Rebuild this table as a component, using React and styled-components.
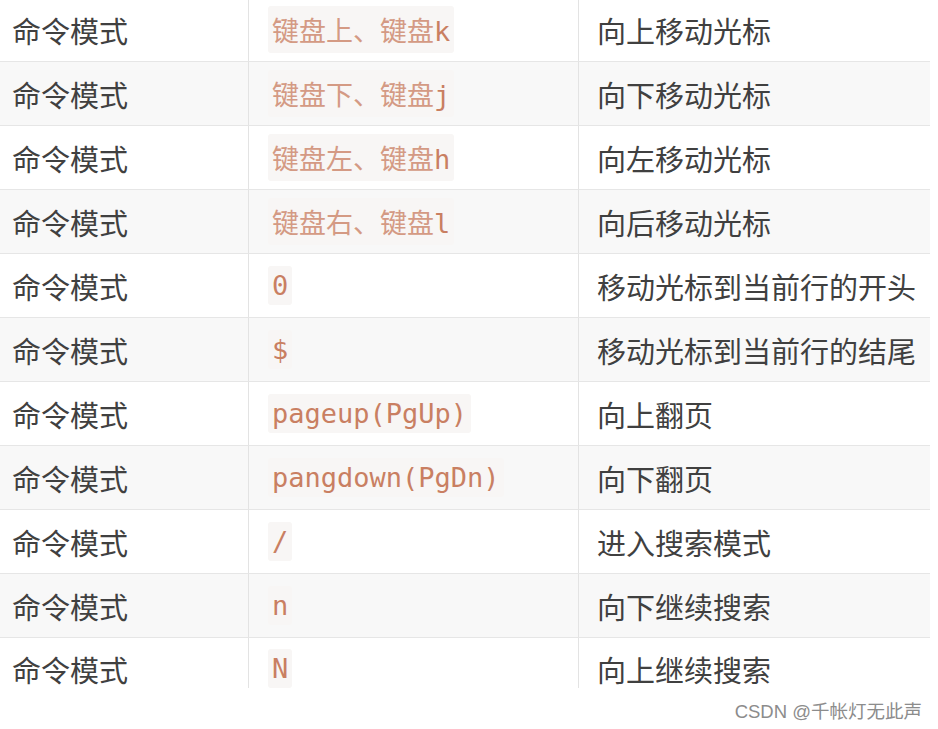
import styled, { createGlobalStyle } from 'styled-components'

const GlobalStyle = createGlobalStyle`
  html, body {
    margin: 0;
    padding: 0;
    background: #ffffff;
    overflow: hidden;
  }
`

const Page = styled.div`
  width: 938px;
  height: 729px;
  overflow: hidden;
  background: #ffffff;
  font-family: "Noto Sans CJK SC", "Noto Sans", sans-serif;
`

const Table = styled.div`
  display: grid;
  grid-template-columns: 249px 330px 351px;
  margin-top: -2px;
`

const Row = styled.div`
  display: contents;
`

const Cell = styled.div`
  height: ${p => (p.$last ? '50px' : '64px')};
  box-sizing: border-box;
  display: flex;
  align-items: center;
  background: ${p => (p.$striped ? '#f8f8f8' : '#ffffff')};
  border-bottom: ${p => (p.$last ? 'none' : '1px solid #e6e6e6')};
  border-right: ${p => (p.$edge ? 'none' : '1px solid #e3e3e3')};
  padding-left: ${p => p.$pad}px;
  padding-top: ${p => (p.$last ? '11px' : '0')};
  color: #404040;
  font-size: 29px;
  white-space: nowrap;
`

const Code = styled.code`
  font-family: "DejaVu Sans Mono", "Noto Sans CJK SC", monospace;
  font-size: 27px;
  color: #c97f62;
  background: #f8f6f5;
  border-radius: 3px;
  padding: 4px 4px;
  margin-left: -4px;
`

const Han = styled.span`
  color: #d49a84;
`

const Footer = styled.div`
  display: flex;
  justify-content: flex-end;
  padding: 9px 16px 0 0;
`

const Mark = styled.span`
  font-family: "Liberation Sans", "Noto Sans CJK SC", sans-serif;
  font-size: 18.5px;
  color: #8c8c8c;
`

const rows = [
  [['键盘上、键盘', 'k'], '向上移动光标'],
  [['键盘下、键盘', 'j'], '向下移动光标'],
  [['键盘左、键盘', 'h'], '向左移动光标'],
  [['键盘右、键盘', 'l'], '向后移动光标'],
  [['', '0'], '移动光标到当前行的开头'],
  [['', '$'], '移动光标到当前行的结尾'],
  [['', 'pageup(PgUp)'], '向上翻页'],
  [['', 'pangdown(PgDn)'], '向下翻页'],
  [['', '/'], '进入搜索模式'],
  [['', 'n'], '向下继续搜索'],
  [['', 'N'], '向上继续搜索'],
]

export default function App() {
  return (
    <Page>
      <GlobalStyle />
      <Table>
        {rows.map(([[han, key], desc], i) => {
          const striped = i % 2 === 1
          const last = i === rows.length - 1
          return (
            <Row key={i}>
              <Cell $striped={striped} $last={last} $pad={12}>命令模式</Cell>
              <Cell $striped={striped} $last={last} $pad={23}>
                <Code>
                  {han && <Han>{han}</Han>}
                  {key}
                </Code>
              </Cell>
              <Cell $striped={striped} $last={last} $pad={18} $edge>{desc}</Cell>
            </Row>
          )
        })}
      </Table>
      <Footer>
        <Mark>CSDN @千帐灯无此声</Mark>
      </Footer>
    </Page>
  )
}
